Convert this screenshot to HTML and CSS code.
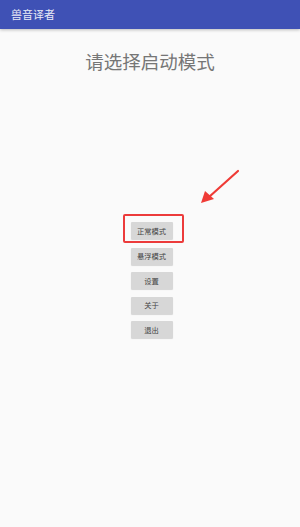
FILE: index.html
```html
<!DOCTYPE html>
<html lang="zh-CN">
<head>
  <meta charset="UTF-8" />
  <meta name="viewport" content="width=device-width, initial-scale=1.0"/>
  <title>兽音译者</title>
  <link rel="stylesheet" href="styles.css">
</head>
<body>
  <div class="toolbar">兽音译者</div>

  <div class="content">
    <h2 class="titulo">请选择启动模式</h2>

    <div class="botoes">
      <div class="destaque">
        <button class="btn">正常模式</button>
      </div>
      <button class="btn">悬浮模式</button>
      <button class="btn">设置</button>
      <button class="btn">关于</button>
      <button class="btn">退出</button>
    </div>

    <!-- seta de anotacao -->
    <svg class="seta" width="50" height="45" viewBox="0 0 50 45">
      <line x1="43" y1="6" x2="14" y2="32" stroke="#ef3b36" stroke-width="2.2" stroke-linecap="round"/>
      <polygon points="6,38 10,26 19,34" fill="#ef3b36"/>
    </svg>
  </div>
</body>
</html>
```

FILE: styles.css
```css
body {
  margin: 0;
  background-color: #fafafa;
  font-family: "Noto Sans CJK SC", "Noto Sans", sans-serif;
}

.toolbar {
  height: 29px;
  line-height: 29px;
  padding-left: 11px;
  background-color: #3f51b5;
  color: #e8eaf6;
  font-size: 11px;
  box-shadow: 0 1px 3px rgba(0,0,0,0.25);
}

.content {
  position: relative;
  height: 498px;
}

.titulo {
  margin: 0;
  padding-top: 18px;
  text-align: center;
  font-size: 18.5px;
  font-weight: normal;
  color: #767676;
  line-height: 28px;
}

.botoes {
  display: flex;
  flex-direction: column;
  align-items: center;
  gap: 7.6px;
  margin-top: 147px;
  padding-left: 3px;
}

.destaque {
  display: flex;
  border: 2px solid #ec3b3b;
  border-radius: 2px;
  padding: 6px 9px 2px 6px;
  margin: -8px 0 -3px 3px;
}

.btn {
  display: block;
  width: 42px;
  height: 17px;
  padding: 0;
  border: none;
  border-radius: 1px;
  background-color: #d7d7d7;
  color: #444;
  font-family: "Noto Sans CJK SC", sans-serif;
  font-size: 7.3px;
  box-shadow: 0 1px 1px rgba(0,0,0,0.15);
}

.seta {
  position: absolute;
  left: 195px;
  top: 136px;
}
```
